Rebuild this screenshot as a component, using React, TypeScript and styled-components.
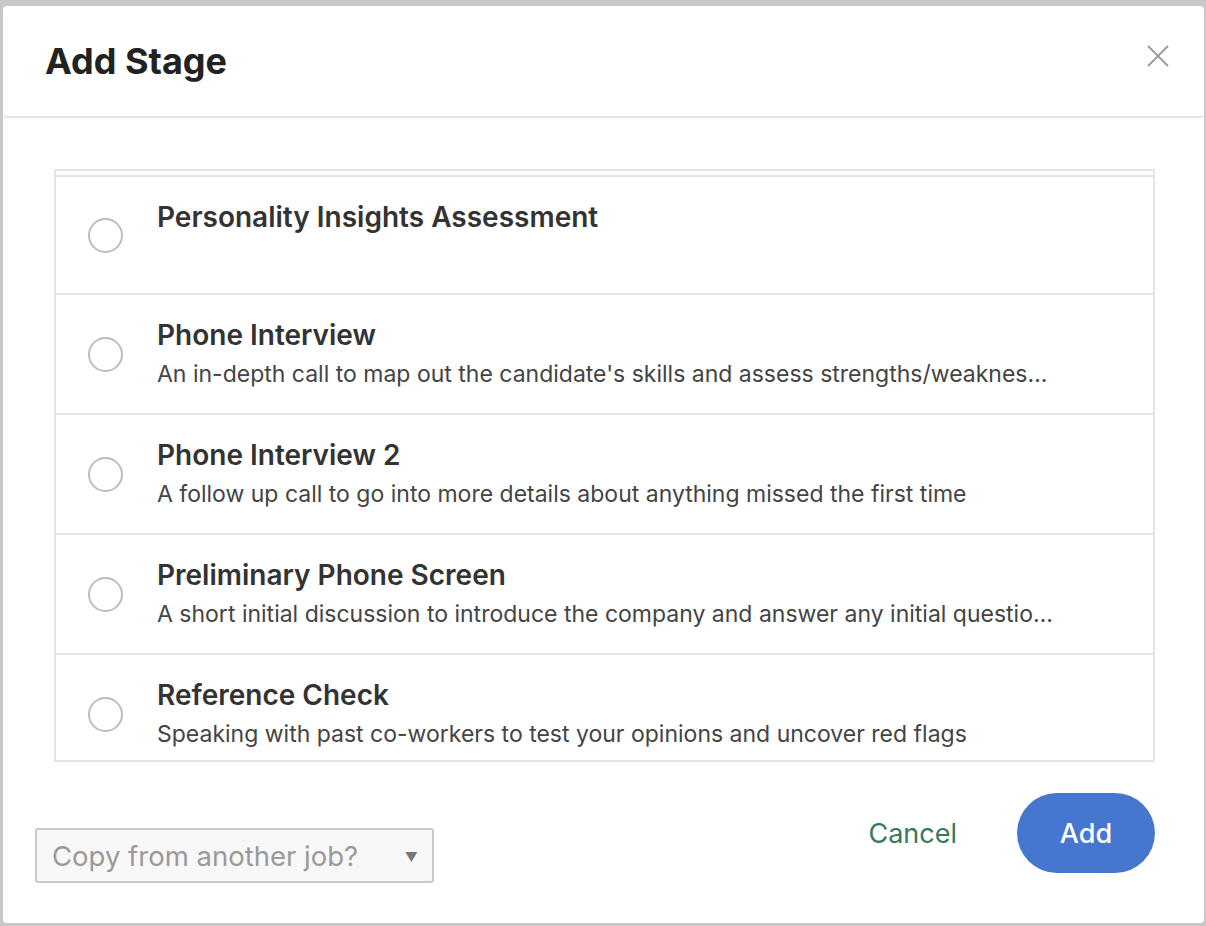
import React from "react";
import styled, { createGlobalStyle } from "styled-components";

const Global = createGlobalStyle`
  html, body { margin: 0; padding: 0; background: #c8c8c8; }
  body { font-family: Inter, "Noto Sans", sans-serif; }
  * { box-sizing: border-box; }
`;

const Page = styled.div`
  width: 1206px;
  height: 926px;
  padding: 6px 2px 3px 3px;
  display: flex;
`;

const Modal = styled.div`
  flex: 1;
  background: #fff;
  border-radius: 4px;
  display: flex;
  flex-direction: column;
  overflow: hidden;
`;

const Header = styled.div`
  height: 112px;
  flex-shrink: 0;
  border-bottom: 2px solid #e4e4e4;
  border-radius: 0 0 4px 4px;
  display: flex;
  align-items: center;
  justify-content: space-between;
  padding: 0 34px 0 42px;
`;

const Title = styled.h1`
  margin: 0;
  font-size: 36px;
  font-weight: 700;
  color: #222;
`;

const CloseButton = styled.button`
  border: none;
  background: none;
  padding: 0;
  width: 24px;
  height: 24px;
  margin-top: -10px;
  display: flex;
  align-items: center;
  justify-content: center;
  cursor: pointer;
`;

const Body = styled.div`
  padding: 51px 49px 0 51px;
`;

const List = styled.div`
  height: 593px;
  border: 2px solid #e4e4e4;
  padding-top: 4px;
  overflow: hidden;
`;

const Row = styled.div<{ $h: number }>`
  height: ${(p) => p.$h}px;
  flex-shrink: 0;
  border-top: 2px solid #e4e4e4;
  display: flex;
  align-items: center;
  padding: 0 96px 0 32px;
`;

const Radio = styled.span`
  width: 35px;
  height: 35px;
  border-radius: 50%;
  border: 2px solid #bdbdbd;
  flex-shrink: 0;
  margin-right: 34px;
`;

const TextCol = styled.div<{ $top: number }>`
  flex: 1;
  min-width: 0;
  align-self: flex-start;
  padding-top: ${(p) => p.$top}px;
`;

const StageName = styled.div`
  font-size: 28px;
  font-weight: 600;
  color: #333;
  line-height: 30px;
`;

const StageDesc = styled.div`
  font-size: 23px;
  color: #444;
  line-height: 30px;
  margin-top: 9px;
  white-space: nowrap;
  overflow: hidden;
  text-overflow: ellipsis;
`;

const Footer = styled.div`
  display: flex;
  align-items: flex-start;
  padding: 31px 49px 0 32px;
`;

const SelectBox = styled.div`
  margin-top: 35px;
  width: 399px;
  height: 55px;
  border: 2px solid #c9c9c9;
  border-radius: 3px;
  background: #f8f8f8;
  display: flex;
  align-items: center;
  justify-content: space-between;
  padding: 0 14px 0 15px;
  color: #9a9a9a;
  font-size: 27.5px;
`;

const Caret = styled.span`
  font-size: 13px;
  color: #777;
  margin-top: 2px;
`;

const Spacer = styled.div`
  flex: 1;
`;

const CancelButton = styled.button`
  border: none;
  background: none;
  color: #357a5b;
  font-family: inherit;
  font-size: 27px;
  height: 80px;
  padding: 0;
  margin-right: 60px;
  cursor: pointer;
`;

const AddButton = styled.button`
  border: none;
  background: #4677d0;
  color: #fff;
  font-family: inherit;
  font-size: 27px;
  font-weight: 500;
  width: 138px;
  height: 80px;
  border-radius: 40px;
  cursor: pointer;
`;

const stages = [
  { name: "Personality Insights Assessment", desc: "", h: 118 },
  {
    name: "Phone Interview",
    desc: "An in-depth call to map out the candidate's skills and assess strengths/weaknesses in more detail",
    h: 120,
  },
  {
    name: "Phone Interview 2",
    desc: "A follow up call to go into more details about anything missed the first time",
    h: 120,
  },
  {
    name: "Preliminary Phone Screen",
    desc: "A short initial discussion to introduce the company and answer any initial questions the candidate may have",
    h: 120,
  },
  {
    name: "Reference Check",
    desc: "Speaking with past co-workers to test your opinions and uncover red flags",
    h: 120,
  },
];

export default function App() {
  return (
    <Page>
      <Global />
      <Modal>
        <Header>
          <Title>Add Stage</Title>
          <CloseButton aria-label="Close">
            <svg width="22" height="22" viewBox="0 0 22 22">
              <path d="M1 1L21 21M21 1L1 21" stroke="#9a9a9a" strokeWidth="1.8" fill="none" />
            </svg>
          </CloseButton>
        </Header>
        <Body>
          <List>
            {stages.map((s) => (
              <Row key={s.name} $h={s.h}>
                <Radio />
                <TextCol $top={25}>
                  <StageName>{s.name}</StageName>
                  {s.desc && <StageDesc>{s.desc}</StageDesc>}
                </TextCol>
              </Row>
            ))}
          </List>
        </Body>
        <Footer>
          <SelectBox>
            <span>Copy from another job?</span>
            <Caret>▼</Caret>
          </SelectBox>
          <Spacer />
          <CancelButton>Cancel</CancelButton>
          <AddButton>Add</AddButton>
        </Footer>
      </Modal>
    </Page>
  );
}
